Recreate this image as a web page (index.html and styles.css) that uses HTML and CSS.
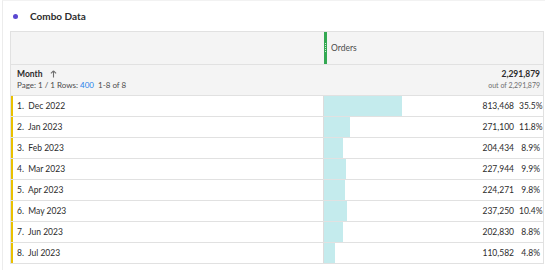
FILE: index.html
```html
<!DOCTYPE html>
<html>
<head>
<meta charset="utf-8">
<link rel="stylesheet" href="styles.css">
</head>
<body>
<div class="panel">
  <div class="title"><span class="dot"></span><span class="title-text">Combo Data</span></div>
  <div class="table">
    <div class="colhead">
      <div class="colhead-left"></div>
      <div class="colhead-metric"><span class="handle"></span><span class="metric-name">Orders</span></div>
    </div>
    <div class="dimhead">
      <div class="dimhead-left">
        <div class="dim-name">Month <svg class="sort" width="7" height="8" viewBox="0 0 7 8"><path d="M3.5 0.8 L0.9 3.4 M3.5 0.8 L6.1 3.4 M3.5 0.8 V7.6" stroke="#6e6e6e" stroke-width="1.1" fill="none"/></svg></div>
        <div class="pager">Page: 1 / 1 Rows: <span class="link">400</span> &nbsp;1-8 of 8</div>
      </div>
      <div class="dimhead-metric">
        <div class="total">2,291,879</div>
        <div class="outof">out of 2,291,879</div>
      </div>
    </div>
    <div class="row"><div class="label">1.&nbsp; Dec 2022</div><div class="cell"><div class="bar" style="width:35.5%"></div><span class="num">813,468</span><span class="pct">35.5%</span></div></div>
    <div class="row"><div class="label">2.&nbsp; Jan 2023</div><div class="cell"><div class="bar" style="width:11.8%"></div><span class="num">271,100</span><span class="pct">11.8%</span></div></div>
    <div class="row"><div class="label">3.&nbsp; Feb 2023</div><div class="cell"><div class="bar" style="width:8.9%"></div><span class="num">204,434</span><span class="pct">8.9%</span></div></div>
    <div class="row"><div class="label">4.&nbsp; Mar 2023</div><div class="cell"><div class="bar" style="width:9.9%"></div><span class="num">227,944</span><span class="pct">9.9%</span></div></div>
    <div class="row"><div class="label">5.&nbsp; Apr 2023</div><div class="cell"><div class="bar" style="width:9.8%"></div><span class="num">224,271</span><span class="pct">9.8%</span></div></div>
    <div class="row"><div class="label">6.&nbsp; May 2023</div><div class="cell"><div class="bar" style="width:10.4%"></div><span class="num">237,250</span><span class="pct">10.4%</span></div></div>
    <div class="row"><div class="label">7.&nbsp; Jun 2023</div><div class="cell"><div class="bar" style="width:8.8%"></div><span class="num">202,830</span><span class="pct">8.8%</span></div></div>
    <div class="row"><div class="label">8.&nbsp; Jul 2023</div><div class="cell"><div class="bar" style="width:4.8%"></div><span class="num">110,582</span><span class="pct">4.8%</span></div></div>
  </div>
</div>
</body>
</html>
```
FILE: styles.css
```css
html, body {
  margin: 0;
  padding: 0;
  background: #ffffff;
}
body {
  font-family: Lato, "Open Sans", sans-serif;
  color: #2c2c2c;
  width: 545px;
  height: 271px;
  overflow: hidden;
}
.panel {
  margin-left: 2px;
  border-left: 1px solid #ececec;
  border-top: 1px solid #f2f2f2;
  height: 270px;
  box-sizing: border-box;
}
.title {
  height: 30px;
  display: flex;
  align-items: center;
  padding-left: 10px;
}
.dot {
  width: 5px;
  height: 5px;
  border-radius: 50%;
  background: #5a47d1;
  margin-right: 12px;
}
.title-text {
  font-size: 10px;
  font-weight: 700;
  color: #2c2c2c;
}
.table {
  margin-left: 7px;
  width: 534px;
  border: 1px solid #e1e1e1;
  border-bottom: none;
  box-sizing: border-box;
}
.colhead, .dimhead, .row {
  display: grid;
  grid-template-columns: 313px 219px;
}
.colhead {
  height: 32px;
  background: #f4f4f4;
  border-bottom: 1px solid #e1e1e1;
}
.colhead-metric {
  display: flex;
  align-items: center;
}
.handle {
  position: relative;
  align-self: stretch;
  width: 3px;
  background: #33a852;
}
.handle::after {
  content: "";
  position: absolute;
  left: 1px;
  top: 11px;
  width: 1px;
  height: 10px;
  background: repeating-linear-gradient(to bottom, rgba(255,255,255,0.75) 0 1px, transparent 1px 2px);
}
.metric-name {
  font-size: 8.5px;
  color: #4b4b4b;
  margin-left: 4px;
}
.dimhead {
  height: 30px;
  background: #f4f4f4;
  border-bottom: 1px solid #e1e1e1;
}
.dimhead-left {
  padding: 3px 0 0 6px;
}
.dim-name {
  font-size: 8.5px;
  font-weight: 700;
  color: #2c2c2c;
  display: flex;
  align-items: center;
  gap: 8px;
  height: 12px;
}
.sort {
  display: block;
}
.pager {
  font-size: 8px;
  color: #4b4b4b;
  margin-top: 0;
}
.link {
  color: #2680eb;
}
.dimhead-metric {
  text-align: right;
  padding: 4px 3px 0 0;
}
.total {
  font-size: 8.5px;
  font-weight: 700;
  color: #2c2c2c;
  line-height: 11px;
}
.outof {
  font-size: 7px;
  color: #6e6e6e;
  line-height: 10px;
}
.row {
  height: 21px;
  border-bottom: 1px solid #e1e1e1;
  box-sizing: border-box;
}
.label {
  border-left: 2px solid #e9c100;
  padding-left: 4px;
  font-size: 8.5px;
  color: #2c2c2c;
  display: flex;
  align-items: center;
}
.cell {
  position: relative;
  border-left: 1px solid #dcdcdc;
  margin-left: -1px;
  display: flex;
  align-items: center;
  justify-content: flex-end;
  padding-right: 3px;
  font-size: 8.5px;
  color: #2c2c2c;
}
.bar {
  position: absolute;
  left: 0;
  top: 0;
  bottom: 0;
  background: #c4ebed;
}
.num, .pct {
  position: relative;
}
.pct {
  width: 21px;
  text-align: right;
  margin-left: 5px;
}
```
